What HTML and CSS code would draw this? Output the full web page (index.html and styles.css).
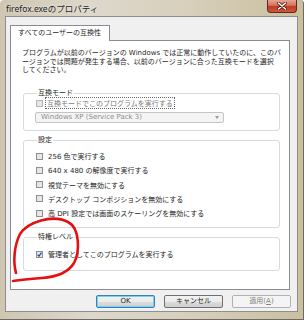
FILE: index.html
```html
<!DOCTYPE html>
<html>

<head>
    <meta charset="utf-8">
    <title>firefox.exeのプロパティ</title>
    <link rel="stylesheet" href="styles.css">
</head>

<body>

    <div class="window">

        <div class="titlebar">
            <span class="title">firefox.exeのプロパティ</span>
            <span class="close">
                <svg width="10" height="8" viewBox="0 0 10 8">
                    <path d="M1.5 1 L8.5 7 M8.5 1 L1.5 7" stroke="#4a1a10" stroke-width="3" stroke-linecap="round"/>
                    <path d="M1.5 1 L8.5 7 M8.5 1 L1.5 7" stroke="#fff" stroke-width="1.6" stroke-linecap="round"/>
                </svg>
            </span>
        </div>

        <div class="client">

            <div class="tabs">
                <span class="tab">すべてのユーザーの互換性</span>
            </div>

            <div class="panel">

                <p class="desc">プログラムが以前のバージョンの Windows では正常に動作していたのに、このバ<br>ージョンでは問題が発生する場合、以前のバージョンに合った互換モードを選択<br>してください。</p>

                <fieldset class="group group-compat">
                    <legend>互換モード</legend>
                    <div class="row disabled">
                        <span class="box"></span>
                        <span class="focus">互換モードでこのプログラムを実行する</span>
                    </div>
                    <div class="select">
                        Windows XP (Service Pack 3)
                        <span class="arrow"></span>
                    </div>
                </fieldset>

                <fieldset class="group group-settings">
                    <legend>設定</legend>
                    <div class="row"><span class="box"></span>256 色で実行する</div>
                    <div class="row"><span class="box"></span>640 x 480 の解像度で実行する</div>
                    <div class="row"><span class="box"></span>視覚テーマを無効にする</div>
                    <div class="row"><span class="box"></span>デスクトップ コンポジションを無効にする</div>
                    <div class="row"><span class="box"></span>高 DPI 設定では画面のスケーリングを無効にする</div>
                </fieldset>

                <fieldset class="group group-level">
                    <legend>特権レベル</legend>
                    <div class="row">
                        <span class="box checked">
                            <svg width="5" height="5" viewBox="0 0 5 5">
                                <path d="M0.6 2.6 L2 4.2 L4.5 0.6" fill="none" stroke="#2a4a9a" stroke-width="1.2"/>
                            </svg>
                        </span>
                        管理者としてこのプログラムを実行する
                    </div>
                </fieldset>

            </div>

            <div class="buttons">
                <span class="btn default">OK</span>
                <span class="btn">キャンセル</span>
                <span class="btn inactive">適用(<u>A</u>)</span>
            </div>

        </div>

        <!-- red pen mark drawn over the dialog -->
        <svg class="mark" width="304" height="320" viewBox="0 0 304 320">
            <path d="M16 273 C13 262 14 246 20 234 C28 222 52 214 68 222 C80 228 80 252 74 263 C68 273 55 277 42 278 C30 279 20 280 13 281"
                fill="none" stroke="#e3120f" stroke-width="2.6" stroke-linecap="round"/>
        </svg>

    </div>

</body>

</html>
```

FILE: styles.css
```css
body {
    margin: 0;
    font-family: "DejaVu Sans", "Noto Sans CJK JP", sans-serif;
    font-size: 7px;
    color: #262626;
    background: #fff;
}

.window {
    position: relative;
    width: 304px;
    height: 320px;
    box-sizing: border-box;
    padding: 0 5px 7px 5px;
    display: flex;
    flex-direction: column;
    background: linear-gradient(90deg, #cfc6b2, #ddd8cc 30%, #d8d0bd 60%, #cbbf9f);
    border-right: 1px solid #6b6a66;
    border-bottom: 1px solid #6b6a66;
    border-top-left-radius: 4px;
    border-top-right-radius: 4px;
}

.titlebar {
    height: 16px;
    display: flex;
    align-items: flex-start;
}

.title {
    margin: 4px 0 0 1px;
    font-family: "Noto Sans", "Noto Sans CJK JP", sans-serif;
    font-size: 8.5px;
    line-height: 10px;
    color: #1c1c1c;
    text-shadow: 0 0 3px #f4f2ec;
}

.close {
    margin-left: auto;
    margin-right: 1px;
    width: 30px;
    height: 13px;
    box-sizing: border-box;
    display: flex;
    align-items: center;
    justify-content: center;
    border: 1px solid #5b2a22;
    border-top: none;
    border-radius: 0 0 4px 4px;
    background: linear-gradient(#e7a696, #d4715a 45%, #c23a20 55%, #d0583c);
}

.client {
    flex: 1;
    display: flex;
    flex-direction: column;
    padding: 8px 7px 3px 4px;
    border: 1px solid #8e8e8e;
    background: #f0f0f0;
}

.tabs {
    display: flex;
    height: 16px;
    margin-bottom: -1px;
    position: relative;
    z-index: 1;
}

.tab {
    width: 100px;
    box-sizing: border-box;
    border: 1px solid #898c95;
    border-bottom: none;
    background: #fff;
    line-height: 14px;
    padding-left: 7px;
}

.panel {
    flex: 1;
    border: 1px solid #898c95;
    background: #fff;
    padding: 8px 0 0 0;
}

.desc {
    margin: 0 0 0 11px;
    line-height: 8.5px;
    white-space: nowrap;
}

.group {
    margin: 0 9px 0 12px;
    padding: 0 0 0 12px;
    border: 1px solid #d5dbe0;
    border-radius: 3px;
}

.group legend {
    padding: 0 1px;
    margin-left: 1px;
    line-height: 9px;
}

.group-compat {
    margin-top: 14px;
    padding-top: 1px;
    padding-bottom: 7px;
}

.group-settings {
    margin-top: 5px;
    padding-top: 7px;
    padding-bottom: 9px;
}

.group-settings .row + .row {
    margin-top: 5.3px;
}

.group-level {
    margin-top: 5px;
    padding-top: 8px;
    padding-bottom: 11px;
}

.row {
    display: flex;
    align-items: center;
    height: 9px;
    white-space: nowrap;
}

.box {
    width: 7px;
    height: 7px;
    box-sizing: border-box;
    margin-right: 5px;
    border: 1px solid #8f8f8f;
    background: linear-gradient(135deg, #d8d8d8, #f6f6f6);
    box-shadow: inset 0 0 0 1px #e6e6e6;
    display: flex;
    align-items: center;
    justify-content: center;
}

.disabled {
    color: #7a7a7a;
}

.disabled .box {
    border-color: #b5b5b5;
    margin-right: 3px;
}

.focus {
    outline: 1px dotted #666;
    padding: 0 1px;
}

.select {
    position: relative;
    width: 189px;
    height: 11px;
    box-sizing: border-box;
    margin: 4px 0 0 -1px;
    padding-left: 5px;
    border: 1px solid #c4c4c4;
    border-radius: 2px;
    background: #f4f4f4;
    color: #8d8d8d;
    line-height: 9px;
}

.arrow {
    position: absolute;
    right: 4px;
    top: 3px;
    border-left: 2.5px solid transparent;
    border-right: 2.5px solid transparent;
    border-top: 3px solid #9a9a9a;
}

.buttons {
    display: flex;
    justify-content: flex-end;
    gap: 9px;
    margin-top: 5px;
    margin-right: -1px;
}

.btn {
    width: 59px;
    height: 13px;
    box-sizing: border-box;
    border: 1px solid #707070;
    border-radius: 2px;
    background: linear-gradient(#f2f2f2, #ebebeb 50%, #dddddd 50%, #cfcfcf);
    text-align: center;
    line-height: 11px;
}

.btn.default {
    border-color: #3c7fb1;
    box-shadow: inset 0 0 0 1px #6fd3f6;
}

.btn.inactive {
    border-color: #adb2b5;
    background: #f4f4f4;
    color: #838383;
}

.mark {
    position: absolute;
    left: 0;
    top: 0;
    pointer-events: none;
}
```
